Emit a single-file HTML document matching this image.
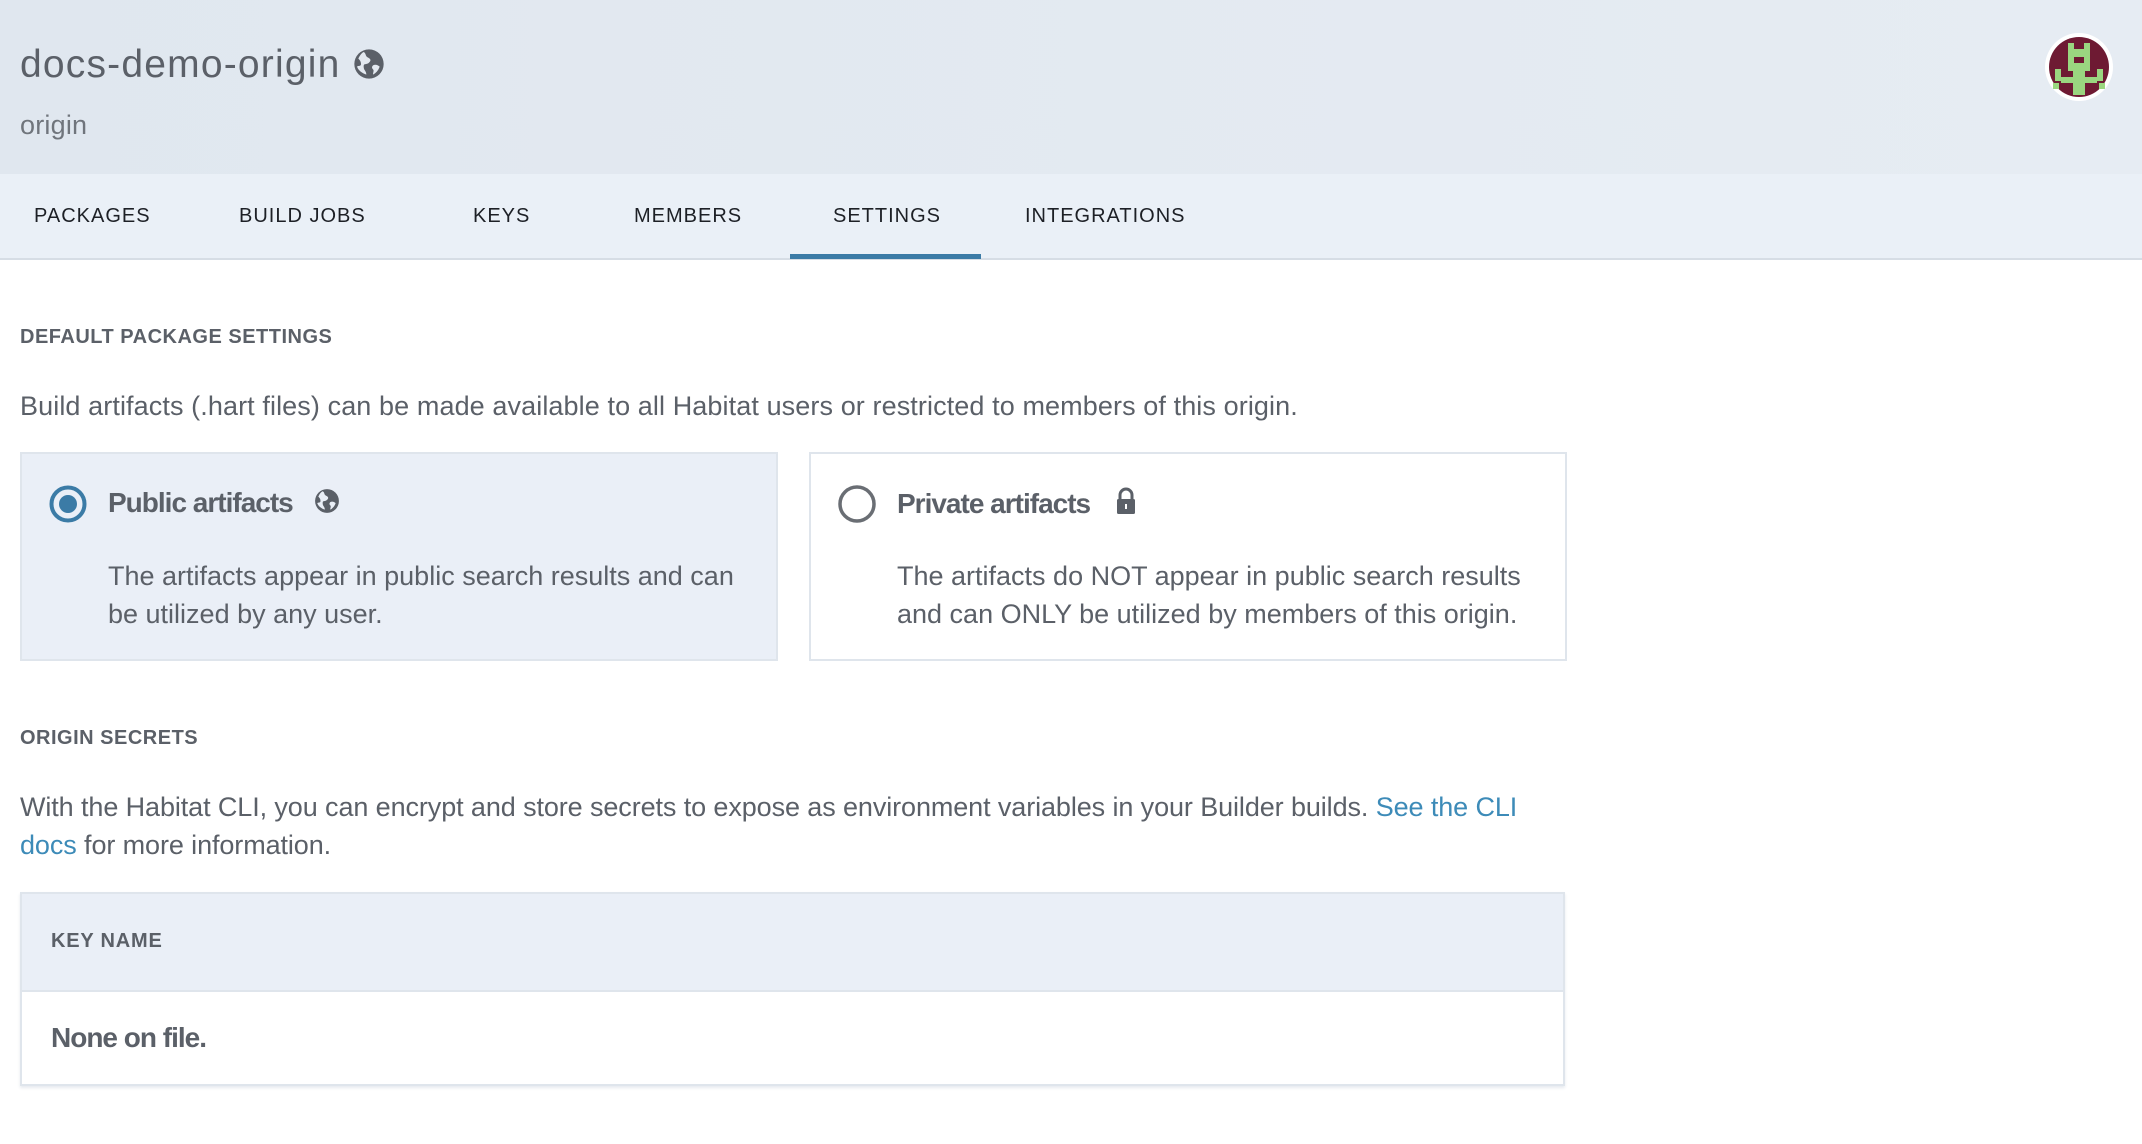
<!DOCTYPE html>
<html><head><meta charset="utf-8"><style>
*{margin:0;padding:0;box-sizing:border-box}
body{width:2142px;height:1144px;background:#fff;font-family:"Liberation Sans",sans-serif;color:#5b6068;position:relative;overflow:hidden}
.hdr{position:absolute;left:0;top:0;width:2142px;height:174px;background:linear-gradient(90deg,#e0e7ef,#e6ecf3)}
.t{position:absolute;left:20px;top:43px;font-size:39px;color:#5b6068;letter-spacing:1.2px}
.sub{position:absolute;left:20px;top:110px;font-size:27px;color:#70757c;letter-spacing:0.2px}
.nav{position:absolute;left:0;top:174px;width:2142px;height:86px;background:#eaf0f7;border-bottom:2px solid #d6dde5}
.nav span{position:absolute;top:31px;font-size:20px;color:#1d2026;letter-spacing:1px}
.ul{position:absolute;left:790px;top:254px;width:191px;height:5px;background:#3b7ba6}
.h{position:absolute;left:20px;font-size:20px;font-weight:bold;color:#5b6068;letter-spacing:0.5px}
.p{position:absolute;left:20px;font-size:27px;color:#5b6068;letter-spacing:0.1px;line-height:38px}
.card{position:absolute;top:452px;height:209px;width:758px;border:2px solid #dfe5ec}
.card .ti{position:absolute;left:86px;top:33px;font-size:28px;font-weight:bold;letter-spacing:-1px;color:#5b6068}
.card .d{position:absolute;left:86px;top:103px;font-size:27px;line-height:38px;letter-spacing:0px;color:#5b6068}
.tbl{position:absolute;left:20px;top:892px;width:1545px;height:194px;border:2px solid #dfe5ec;box-shadow:0 2px 3px #e6eaef}
a{color:#3d8bb8;text-decoration:none}
</style></head><body>
<div class="hdr">
<div class="t">docs-demo-origin <svg width="32" height="32" viewBox="0 0 24 24" style="vertical-align:-3px"><circle cx="12" cy="12" r="11" fill="#5b6068"/><path d="M8 3c2 1 1 3 3 4s3 2 1 4-4 0-4 3 2 3 2 6c-3-1-6-3-7-6 1-1 3 0 3-2S5 9 4 8c1-2 2-4 4-5zM15 13c2-1 4 0 5 1-1 3-3 5-5 6 0-2 1-3 0-4s-1-2 0-3z" fill="#e3e9f0"/></svg></div>
<div class="sub">origin</div>
<svg style="position:absolute;left:2045px;top:33px" width="68" height="68" viewBox="0 0 68 68"><circle cx="34" cy="34" r="34" fill="#fff"/><circle cx="34" cy="34" r="30" fill="#6e1a33"/><g fill="#9ad680"><rect x="23" y="10" width="6" height="6"/><rect x="39" y="10" width="6" height="6"/><rect x="23" y="16" width="22" height="8"/><rect x="23" y="24" width="6" height="6"/><rect x="39" y="24" width="6" height="6"/><rect x="23" y="30" width="22" height="8"/><rect x="10" y="36" width="6" height="12"/><rect x="52" y="36" width="6" height="12"/><rect x="16" y="44" width="36" height="6"/><rect x="28" y="38" width="12" height="24"/><rect x="8" y="50" width="6" height="6"/><rect x="54" y="50" width="6" height="6"/></g></svg>
</div>
<div class="nav">
<span style="left:34px">PACKAGES</span><span style="left:239px">BUILD JOBS</span><span style="left:473px">KEYS</span><span style="left:634px">MEMBERS</span><span style="left:833px">SETTINGS</span><span style="left:1025px">INTEGRATIONS</span>
</div>
<div class="ul"></div>
<div class="h" style="top:326px">DEFAULT PACKAGE SETTINGS</div>
<div class="p" style="top:387px">Build artifacts (.hart files) can be made available to all Habitat users or restricted to members of this origin.</div>
<div class="card" style="left:20px;background:#eaeff7">
<svg style="position:absolute;left:26px;top:30px" width="40" height="40"><circle cx="20" cy="20" r="16.5" fill="none" stroke="#3b7ba6" stroke-width="4"/><circle cx="20" cy="20" r="9" fill="#3b7ba6"/></svg>
<div class="ti">Public artifacts <svg width="26" height="26" viewBox="0 0 24 24" style="vertical-align:-2px;margin-left:14px"><circle cx="12" cy="12" r="11" fill="#5b6068"/><path d="M8 3c2 1 1 3 3 4s3 2 1 4-4 0-4 3 2 3 2 6c-3-1-6-3-7-6 1-1 3 0 3-2S5 9 4 8c1-2 2-4 4-5zM15 13c2-1 4 0 5 1-1 3-3 5-5 6 0-2 1-3 0-4s-1-2 0-3z" fill="#eaeff7"/></svg></div>
<div class="d">The artifacts appear in public search results and can<br>be utilized by any user.</div>
</div>
<div class="card" style="left:809px;background:#fff">
<svg style="position:absolute;left:26px;top:30px" width="40" height="40"><circle cx="20" cy="20" r="17" fill="none" stroke="#6a6e74" stroke-width="3.5"/></svg>
<div class="ti">Private artifacts <svg width="22" height="28" viewBox="0 0 22 28" style="vertical-align:-2px;margin-left:18px"><path d="M5 12V8a6 6 0 0 1 12 0v4" fill="none" stroke="#5b6068" stroke-width="3"/><rect x="2" y="12" width="18" height="15" rx="1.5" fill="#5b6068"/><rect x="10" y="17" width="2" height="5" fill="#fff"/></svg></div>
<div class="d">The artifacts do NOT appear in public search results<br>and can ONLY be utilized by members of this origin.</div>
</div>
<div class="h" style="top:727px">ORIGIN SECRETS</div>
<div class="p" style="top:788px;letter-spacing:-0.1px">With the Habitat CLI, you can encrypt and store secrets to expose as environment variables in your Builder builds. <a>See the CLI</a><br><a>docs</a> for more information.</div>
<div class="tbl">
<div style="height:98px;background:#eaeff7;border-bottom:2px solid #dfe5ec"></div>
<div style="position:absolute;left:29px;top:36px;font-size:20px;font-weight:bold;letter-spacing:0.8px">KEY NAME</div>
<div style="position:absolute;left:29px;top:128px;font-size:28px;font-weight:bold;letter-spacing:-1px">None on file.</div>
</div>
</body></html>
